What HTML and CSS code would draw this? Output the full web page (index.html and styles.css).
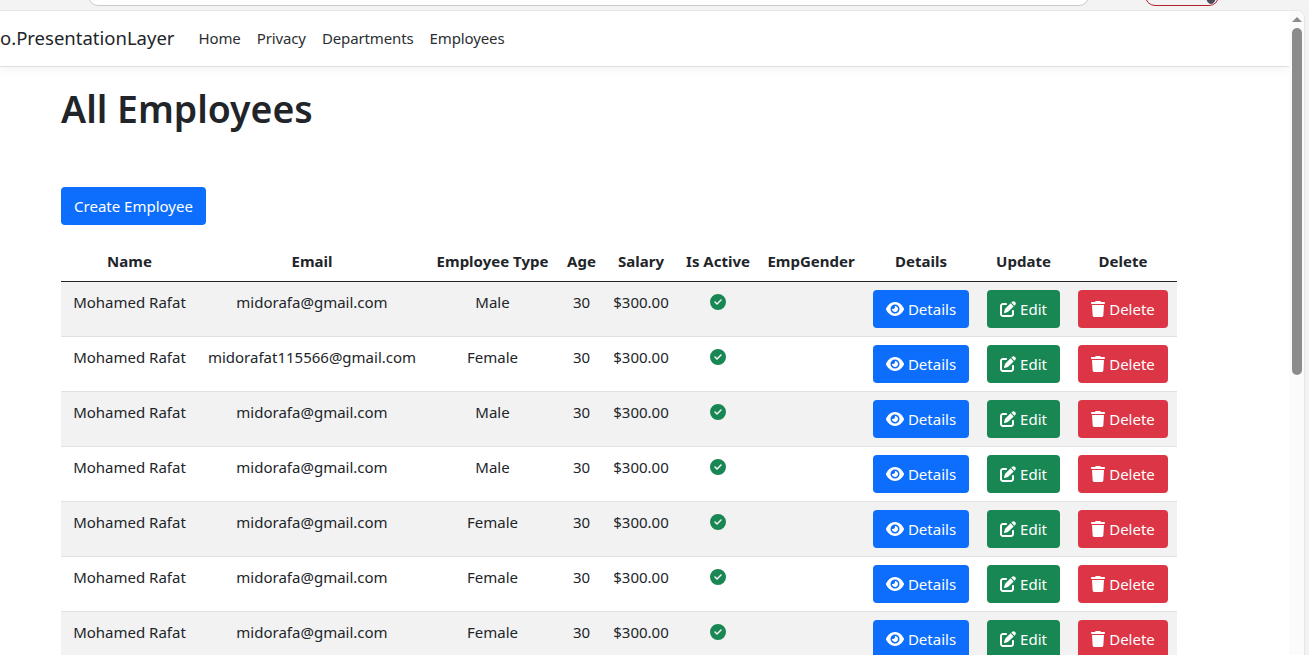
FILE: index.html
```html
<!DOCTYPE html>
<html lang="en">
<head>
<meta charset="utf-8">
<title>All Employees</title>
<link rel="stylesheet" href="styles.css">
</head>
<body>
<svg class="defs" aria-hidden="true">
  <symbol id="i-eye" viewBox="0 0 576 512"><path d="M288 32c-80.800 0-145.500 36.800-192.600 80.600C48.600 156 17.300 208 2.500 243.700c-3.300 7.900-3.300 16.700 0 24.600C17.300 304 48.600 356 95.400 399.400C142.500 443.200 207.200 480 288 480s145.500-36.800 192.600-80.600c46.800-43.500 78.100-95.400 93-131.100c3.300-7.900 3.300-16.700 0-24.600c-14.900-35.700-46.200-87.700-93-131.100C433.500 68.800 368.800 32 288 32zM144 256a144 144 0 1 1 288 0 144 144 0 1 1-288 0zm144-64c0 35.300-28.700 64-64 64c-7.100 0-13.900-1.200-20.300-3.300c-5.500-1.800-11.900 1.600-11.700 7.400c.3 6.900 1.300 13.800 3.200 20.700c13.700 51.200 66.400 81.600 117.600 67.900s81.600-66.400 67.900-117.600c-11.100-41.500-47.800-69.400-88.600-71.100c-5.800-.2-9.200 6.100-7.400 11.700c2.100 6.400 3.300 13.200 3.300 20.300z"/></symbol>
  <symbol id="i-edit" viewBox="0 0 512 512"><path d="M471.600 21.700c-21.900-21.900-57.300-21.900-79.200 0L362.300 51.700l97.900 97.900 30.100-30.100c21.900-21.900 21.900-57.300 0-79.200L471.600 21.700zm-299.200 220c-6.100 6.100-10.800 13.600-13.500 21.900l-29.600 88.800c-2.900 8.600-.6 18.100 5.800 24.600s15.900 8.700 24.600 5.800l88.800-29.600c8.200-2.700 15.700-7.400 21.900-13.500L437.700 172.300 339.700 74.300 172.400 241.700zM96 64C43 64 0 107 0 160V416c0 53 43 96 96 96H352c53 0 96-43 96-96V320c0-17.700-14.300-32-32-32s-32 14.300-32 32v96c0 17.700-14.300 32-32 32H96c-17.700 0-32-14.300-32-32V160c0-17.700 14.300-32 32-32h96c17.700 0 32-14.300 32-32s-14.300-32-32-32H96z"/></symbol>
  <symbol id="i-trash" viewBox="0 0 448 512"><path d="M135.200 17.700L128 32H32C14.300 32 0 46.300 0 64S14.300 96 32 96H416c17.700 0 32-14.300 32-32s-14.300-32-32-32H320l-7.200-14.300C307.400 6.800 296.300 0 284.200 0H163.800c-12.100 0-23.200 6.800-28.600 17.700zM416 128H32L53.200 467c1.600 25.300 22.600 45 47.900 45H346.900c25.300 0 46.300-19.700 47.900-45L416 128z"/></symbol>
  <symbol id="i-check" viewBox="0 0 512 512"><path d="M256 512A256 256 0 1 0 256 0a256 256 0 1 0 0 512zM369 209L241 337c-9.400 9.400-24.600 9.400-33.900 0l-64-64c-9.400-9.400-9.400-24.600 0-33.900s24.600-9.400 33.900 0l47 47L335 175c9.400-9.400 24.600-9.400 33.900 0s9.400 24.600 0 33.900z"/></symbol>
</svg>

<div class="chrome">
  <div class="omnibox"></div>
  <div class="profile"><span class="avatar"></span></div>
</div>

<div class="window">
  <div class="page">
    <nav class="navbar">
      <a class="brand" href="#">o.PresentationLayer</a>
      <ul class="nav">
        <li><a href="#">Home</a></li>
        <li><a href="#">Privacy</a></li>
        <li><a href="#">Departments</a></li>
        <li><a href="#">Employees</a></li>
      </ul>
    </nav>
    <main class="container">
      <h1>All Employees</h1>
      <a class="btn btn-blue create" href="#">Create Employee</a>
      <table>
        <colgroup>
          <col class="c-name"><col class="c-email"><col class="c-type"><col class="c-age"><col class="c-salary"><col class="c-active"><col class="c-gender"><col class="c-details"><col class="c-update"><col class="c-delete">
        </colgroup>
        <thead>
          <tr><th>Name</th><th>Email</th><th>Employee Type</th><th>Age</th><th>Salary</th><th>Is Active</th><th>EmpGender</th><th>Details</th><th>Update</th><th>Delete</th></tr>
        </thead>
        <tbody id="rows">
          <tr><td>Mohamed Rafat</td><td>midorafa@gmail.com</td><td>Male</td><td>30</td><td>$300.00</td><td><svg class="check"><use href="#i-check"/></svg></td><td></td><td><a class="btn btn-blue" href="#"><svg class="ico eye"><use href="#i-eye"/></svg>Details</a></td><td><a class="btn btn-green" href="#"><svg class="ico"><use href="#i-edit"/></svg>Edit</a></td><td><a class="btn btn-red" href="#"><svg class="ico trash"><use href="#i-trash"/></svg>Delete</a></td></tr>
          <tr><td>Mohamed Rafat</td><td>midorafat115566@gmail.com</td><td>Female</td><td>30</td><td>$300.00</td><td><svg class="check"><use href="#i-check"/></svg></td><td></td><td><a class="btn btn-blue" href="#"><svg class="ico eye"><use href="#i-eye"/></svg>Details</a></td><td><a class="btn btn-green" href="#"><svg class="ico"><use href="#i-edit"/></svg>Edit</a></td><td><a class="btn btn-red" href="#"><svg class="ico trash"><use href="#i-trash"/></svg>Delete</a></td></tr>
          <tr><td>Mohamed Rafat</td><td>midorafa@gmail.com</td><td>Male</td><td>30</td><td>$300.00</td><td><svg class="check"><use href="#i-check"/></svg></td><td></td><td><a class="btn btn-blue" href="#"><svg class="ico eye"><use href="#i-eye"/></svg>Details</a></td><td><a class="btn btn-green" href="#"><svg class="ico"><use href="#i-edit"/></svg>Edit</a></td><td><a class="btn btn-red" href="#"><svg class="ico trash"><use href="#i-trash"/></svg>Delete</a></td></tr>
          <tr><td>Mohamed Rafat</td><td>midorafa@gmail.com</td><td>Male</td><td>30</td><td>$300.00</td><td><svg class="check"><use href="#i-check"/></svg></td><td></td><td><a class="btn btn-blue" href="#"><svg class="ico eye"><use href="#i-eye"/></svg>Details</a></td><td><a class="btn btn-green" href="#"><svg class="ico"><use href="#i-edit"/></svg>Edit</a></td><td><a class="btn btn-red" href="#"><svg class="ico trash"><use href="#i-trash"/></svg>Delete</a></td></tr>
          <tr><td>Mohamed Rafat</td><td>midorafa@gmail.com</td><td>Female</td><td>30</td><td>$300.00</td><td><svg class="check"><use href="#i-check"/></svg></td><td></td><td><a class="btn btn-blue" href="#"><svg class="ico eye"><use href="#i-eye"/></svg>Details</a></td><td><a class="btn btn-green" href="#"><svg class="ico"><use href="#i-edit"/></svg>Edit</a></td><td><a class="btn btn-red" href="#"><svg class="ico trash"><use href="#i-trash"/></svg>Delete</a></td></tr>
          <tr><td>Mohamed Rafat</td><td>midorafa@gmail.com</td><td>Female</td><td>30</td><td>$300.00</td><td><svg class="check"><use href="#i-check"/></svg></td><td></td><td><a class="btn btn-blue" href="#"><svg class="ico eye"><use href="#i-eye"/></svg>Details</a></td><td><a class="btn btn-green" href="#"><svg class="ico"><use href="#i-edit"/></svg>Edit</a></td><td><a class="btn btn-red" href="#"><svg class="ico trash"><use href="#i-trash"/></svg>Delete</a></td></tr>
          <tr><td>Mohamed Rafat</td><td>midorafa@gmail.com</td><td>Female</td><td>30</td><td>$300.00</td><td><svg class="check"><use href="#i-check"/></svg></td><td></td><td><a class="btn btn-blue" href="#"><svg class="ico eye"><use href="#i-eye"/></svg>Details</a></td><td><a class="btn btn-green" href="#"><svg class="ico"><use href="#i-edit"/></svg>Edit</a></td><td><a class="btn btn-red" href="#"><svg class="ico trash"><use href="#i-trash"/></svg>Delete</a></td></tr>
        </tbody>
      </table>
    </main>
  </div>
  <div class="scrollbar">
    <div class="arrow"></div>
    <div class="thumb"></div>
  </div>
</div>
```

FILE: styles.css
```css
* { box-sizing: border-box; }
html, body { height: 100%; }
body {
  margin: 0;
  overflow: hidden;
  display: flex;
  flex-direction: column;
  background: #f3f3f3;
  color: #212529;
  font-family: "Noto Sans", "Open Sans", sans-serif;
  font-size: 15px;
  line-height: 24px;
}
a { color: inherit; text-decoration: none; }
.defs { display: none; }

.chrome {
  flex: none;
  height: 10px;
  display: flex;
  align-items: flex-end;
  overflow: hidden;
  padding: 0 0 4px 88px;
}
.omnibox {
  width: 1001px;
  height: 20px;
  flex: none;
  background: #fff;
  border: 1px solid #c9c9c9;
  border-radius: 12px;
}
.profile {
  width: 74px;
  height: 20px;
  flex: none;
  margin: 0 0 0 56px;
  display: flex;
  justify-content: flex-end;
  border: 1.5px solid #b3202c;
  border-radius: 10px;
  overflow: hidden;
}
.avatar {
  width: 10px;
  height: 16px;
  margin: 1px 2px 0 0;
  background: #4a4a5c;
  border-radius: 50%;
}

.window {
  flex: 1;
  min-height: 0;
  display: flex;
  margin-right: 4px;
  background: #fff;
  border-top: 1px solid #e6e6e6;
  border-right: 1px solid #e6e6e6;
  border-top-right-radius: 8px;
  overflow: hidden;
}
.page { flex: 1; min-width: 0; }
.navbar {
  height: 56px;
  display: flex;
  align-items: center;
  padding-bottom: 2px;
  border-bottom: 1px solid #dfdfe8;
  box-shadow: 0 4px 8px rgba(0, 0, 0, .04);
}
.brand { font-size: 18.5px; margin-right: 16px; color: #212529; }
.nav { display: flex; list-style: none; margin: 0; padding: 0; }
.nav a { display: block; padding: 0 8px; color: #2b2f33; letter-spacing: -.12px; }

.container { padding: 18px 0 0 61px; }
h1 {
  margin: 0 0 54px;
  font-size: 37.4px;
  line-height: 48px;
  font-weight: 600;
}
.btn {
  display: inline-flex;
  align-items: center;
  justify-content: center;
  height: 38px;
  padding: 0 12px;
  color: #fff;
  border-radius: 4px;
  white-space: nowrap;
}
.btn-blue { background: #0d6efd; }
.btn-green { background: #198754; }
.btn-red { background: #dc3545; }
.create { width: 145px; margin-bottom: 18px; }

table {
  width: 1116px;
  table-layout: fixed;
  border-collapse: collapse;
}
.c-name { width: 137px; }
.c-email { width: 228px; }
.c-type { width: 133px; }
.c-age { width: 45px; }
.c-salary { width: 74px; }
.c-active { width: 80px; }
.c-gender { width: 106px; }
.c-details { width: 114px; }
.c-update { width: 91px; }
.c-delete { width: 108px; }
th {
  height: 38px;
  padding: 0 0 2px;
  text-align: center;
  font-weight: 700;
  color: #212529;
  border-bottom: 1px solid #212529;
  white-space: nowrap;
}
td {
  height: 55px;
  padding: 8px 0 0;
  text-align: center;
  vertical-align: top;
  border-bottom: 1px solid #dee2e6;
  white-space: nowrap;
}
tbody tr:nth-child(odd) td { background: #f2f2f2; }
.btn-blue.btn { min-width: 96px; }
td .btn-green { width: 73px; }
td .btn-red { width: 90px; }
.ico { width: 16px; height: 16px; fill: currentColor; margin-right: 4px; }
.ico.eye { width: 18px; }
.ico.trash { width: 14px; }
.check { display: block; width: 16px; height: 16px; margin: 4px auto 0; fill: #198754; }

.scrollbar {
  flex: none;
  width: 15px;
  background: #fbfbfb;
  padding: 0 1px 0 1px;
}
.arrow {
  width: 0;
  height: 0;
  margin: 6px auto 0;
  border-left: 5px solid transparent;
  border-right: 5px solid transparent;
  border-bottom: 5px solid #8c8c8c;
}
.thumb {
  width: 10px;
  height: 347px;
  margin: 6px auto 0;
  background: #8c8c8c;
  border-radius: 5px;
}
```
